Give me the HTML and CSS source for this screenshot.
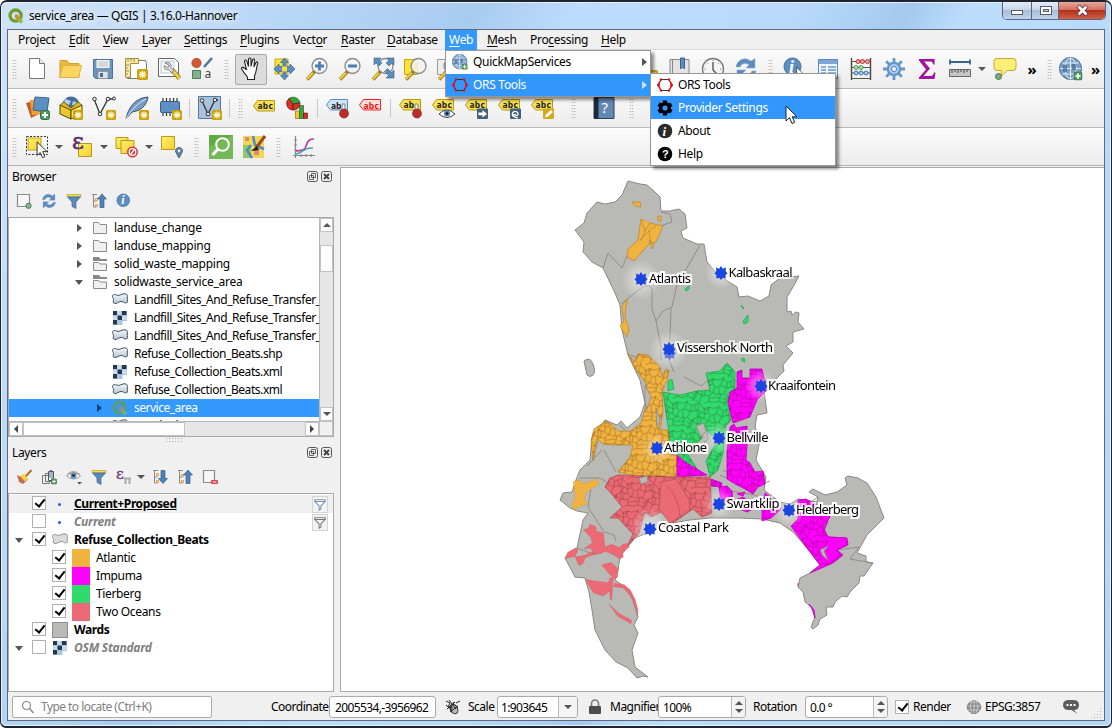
FILE: index.html
```html
<!DOCTYPE html>
<html lang="en">
<head>
<meta charset="utf-8">
<title>service_area — QGIS | 3.16.0-Hannover</title>
<link rel="stylesheet" href="styles.css">
</head>
<body>
<svg class="defs" width="0" height="0">
  <defs>
    <linearGradient id="gy" x1="0" y1="0" x2="1" y2="1"><stop offset="0" stop-color="#fff06a"/><stop offset="1" stop-color="#f0cf30"/></linearGradient>
    <linearGradient id="gp" x1="0" y1="0" x2="0" y2="1"><stop offset="0" stop-color="#f4f7fa"/><stop offset="1" stop-color="#b9c6d4"/></linearGradient>
    <symbol id="qgis" viewBox="0 0 16 16"><circle cx="7.6" cy="7.6" r="5.6" fill="none" stroke="#6b9f2f" stroke-width="3.3"/><path d="M8 8l6 6.5" stroke="#8cc04a" stroke-width="3.4"/><path d="M7 6.5h4L9.500 8 12 11l-1.500 1.200L8 9l-1 1.500z" fill="#ee7913"/></symbol>
    <symbol id="star" viewBox="0 0 10 10"><rect width="10" height="10" rx="1.500" fill="#c9a20c"/><path d="M5 1.500v7M1.500 5h7M2.500 2.500l5 5M7.500 2.500l-5 5" stroke="#fff6cf" stroke-width="1.300"/></symbol>
    <symbol id="new" viewBox="0 0 24 24"><path d="M4.500 1.500h10l5 5v15h-15z" fill="#fff" stroke="#777"/><path d="M14.500 1.500v5h5" fill="#eee" stroke="#777"/></symbol>
    <symbol id="open" viewBox="0 0 24 24"><path d="M2 20.500V3.500h7l2 3h10v14z" fill="#e8b93b" stroke="#d1a02a"/><path d="M1.500 20.500L5 8.500h18.500l-3 12z" fill="#fcd462" stroke="#dcb043"/></symbol>
    <symbol id="save" viewBox="0 0 24 24"><path d="M2.500 2.500h19v19h-17l-2-2z" fill="#6d94bd" stroke="#4d7297"/><path d="M5.500 3h13v8h-13z" fill="#f6f6f6"/><path d="M7 5h10M7 7h10M7 9h10" stroke="#aaa" stroke-width=".8"/><path d="M7 14.500h10v7H7z" fill="#dfe3e8" stroke="#888" stroke-width=".7"/><path d="M9 16h3v4H9z" fill="#4d6c8b"/></symbol>
    <symbol id="layout" viewBox="0 0 24 24"><path d="M3.500 3.500h18l1 3v15h-19z" fill="#fff" stroke="#777"/><path d="M1.500 1.500h13v5h-8v14h-5z" fill="#f3e8a9" stroke="#a98c2c"/><path d="M4 2v3M7 2v2M10 2v3M2 8h3M2 11h2M2 14h3M2 17h2" stroke="#7c6a28" stroke-width=".7"/><use href="#star" x="13" y="12" width="11" height="11"/></symbol>
    <symbol id="manager" viewBox="0 0 24 24"><path d="M1.500 1.500h16l4 4v14h-20z" fill="#fff" stroke="#666"/><path d="M4 4h13v12H4z" fill="#f6f6f6" stroke="#b9c7dc"/><path d="M15 12.500l7.500 9" stroke="#a98410" stroke-width="4.500"/><path d="M15 12.500l7.500 9" stroke="#f1d45c" stroke-width="2.500"/><path d="M8 6c4-2 7 1 6 4.500l3 3-2.500 2-3-3c-3 1-5-1-4-4l2.500 2 2-1V8z" fill="#ddd" stroke="#666" stroke-width=".8"/></symbol>
    <symbol id="styles" viewBox="0 0 24 24"><circle cx="6.500" cy="6" r="4.700" fill="#cf5a33" stroke="#9b3c1e" stroke-width=".6"/><path d="M14 10l8-9" stroke="#49759f" stroke-width="2.500"/><path d="M2.500 13.500h8v8h-8z" fill="#84b08a" stroke="#4d7d56"/><text x="14.500" y="21" font-family="Noto Sans" font-size="12" fill="#444">a</text></symbol>
    <symbol id="hand" viewBox="0 0 24 24"><path d="M8.500 22.500v-2.500C6 17 3.500 13.500 2.500 11.500c0-2 2.500-1.500 5 1.500L5.500 4.500c0-2 2-2 2.500 0l1.500 5v-7c0-2 2.500-2 2.500 0v7l1.500-6.500c.5-1.600 2.300-1 2 .5l-.6 6.500 2.100-4.500c.8-1.200 2-.5 1.700.7-1.200 4-1.200 9-3.200 12.800v3.500z" fill="#fff" stroke="#222" stroke-width="1.100"/></symbol>
    <symbol id="panmove" viewBox="0 0 24 24"><path d="M3 2h13v15H3z" fill="#fbe13a" stroke="#c8a61b"/><path d="M12.500 1l4 4.500h-2.500v4h4V7l5 5-5 5v-2.500h-4v4h2.500l-4 4.500-4-4.500H11v-4H7V17l-5-5 5-5v2.500h4v-4H8.500z" fill="#5c8ec4" stroke="#386594" stroke-width=".7"/><path d="M10 9.500h5v5h-5z" fill="#fbe13a"/></symbol>
    <symbol id="lens" viewBox="0 0 24 24"><path d="M2 22.500l8-8.500" stroke="#947014" stroke-width="3.400"/><path d="M2 22l6-6.300" stroke="#f3cf40" stroke-width="2"/><circle cx="14.500" cy="9" r="7.500" fill="#f1f2f2" fill-opacity=".82" stroke="#8a8a8a" stroke-width="1.300"/><path d="M9.500 8c1-3.500 4-4.500 7-4" stroke="#fff" fill="none"/></symbol>
    <symbol id="zin" viewBox="0 0 24 24"><use href="#lens"/><path d="M14.500 4.500v9M10 9h9" stroke="#4f7fb1" stroke-width="2.800"/></symbol>
    <symbol id="zout" viewBox="0 0 24 24"><use href="#lens"/><path d="M10 9h9" stroke="#4f7fb1" stroke-width="2.800"/></symbol>
    <symbol id="zfull" viewBox="0 0 24 24"><use href="#lens"/><path d="M3 1h7L8 3l3 3-3 3-3-3-2 2zM23 1v7l-2-2-3 3-3-3 3-3-2-2zM23 21h-8l2.500-2.500-4-4 3-3 4 4L23 13z" fill="#5c8bbd" stroke="#3a648e" stroke-width=".6"/></symbol>
    <symbol id="zsel" viewBox="0 0 24 24"><path d="M.5 2.500h13v15H.5z" fill="#fbe13a" stroke="#c8a61b"/><use href="#lens"/></symbol>
    <symbol id="zlay" viewBox="0 0 24 24"><path d="M.5 2.500h13v15H.5z" fill="#eee" stroke="#999"/><use href="#lens"/></symbol>
    <symbol id="bookmark" viewBox="0 0 24 24"><path d="M2 2.500h19V21H2z" fill="#e3e3e3" stroke="#888"/><path d="M4.500 3v18" stroke="#888"/><path d="M12.500 1h4v11l-2-2-2 2z" fill="#5c8bbd" stroke="#3a648e"/></symbol>
    <symbol id="clock" viewBox="0 0 24 24"><circle cx="12" cy="12" r="10.500" fill="#f4f4f4" stroke="#777" stroke-width="1.300"/><path d="M12 5v8l4 4" fill="none" stroke="#555" stroke-width="1.400"/><path d="M12 3v1M3.500 12h1.500M19 12h1.500M6 6l.7.7M18 6l-.7.7" stroke="#888"/></symbol>
    <symbol id="refresh" viewBox="0 0 24 24"><path d="M2 10C3 4 8 1 13 2l4 2 4-2.500V11h-9l3-3c-4-3-8-1-9 2z" fill="#5c8bbd" stroke="#8fb3d9" stroke-width=".6"/><path d="M22 14c-1 6-6 9-11 8l-4-2-4 2.500V13h9l-3 3c4 3 8 1 9-2z" fill="#5c8bbd" stroke="#8fb3d9" stroke-width=".6"/></symbol>
    <symbol id="info" viewBox="0 0 24 24"><circle cx="12" cy="12" r="9.500" fill="#5d8ec2" stroke="#41719f"/><text x="9" y="18" font-family="Liberation Serif" font-size="18" font-style="italic" font-weight="bold" fill="#fff">i</text></symbol>
    <symbol id="cursor" viewBox="0 0 14 20"><path d="M1 1v15l3.500-3.300L7 18.500l2.700-1.200-2.500-5.500H12z" fill="#fff" stroke="#222"/></symbol>
    <symbol id="identify" viewBox="0 0 24 24"><circle cx="9.500" cy="9.500" r="8.500" fill="#5d8ec2" stroke="#41719f"/><text x="6" y="16" font-family="Liberation Serif" font-size="18" font-style="italic" font-weight="bold" fill="#fff">i</text><use href="#cursor" x="13" y="9" width="9" height="14"/></symbol>
    <symbol id="table" viewBox="0 0 24 24"><path d="M2.500 2.500h19v19h-19z" fill="#eef5fc" stroke="#5b87b5"/><path d="M3 3h18v4H3z" fill="#7da7d4"/><path d="M5 10h5M5 13h5M5 16h5M12 10h8M12 13h8M12 16h8" stroke="#6c9acb" stroke-width="1.500"/></symbol>
    <symbol id="abacus" viewBox="0 0 24 24"><path d="M2.500 1v22M21.500 1v22" stroke="#444" stroke-width="1.400"/><path d="M2 4.500h20M2 10.500h20M2 16h20M2 21.500h20" stroke="#555"/><g stroke-width=".9"><g fill="#f1a3a3" stroke="#bb2525"><circle cx="9" cy="4.500" r="2"/><circle cx="13.500" cy="4.500" r="2"/><circle cx="18.500" cy="4.500" r="2"/></g><g fill="#b4dfb4" stroke="#3f8d46"><circle cx="7" cy="10.500" r="2"/><circle cx="12" cy="10.500" r="2"/></g><g fill="#abcdf0" stroke="#376ca4"><circle cx="7" cy="16" r="2"/><circle cx="12" cy="16" r="2"/><circle cx="17" cy="16" r="2"/></g></g></symbol>
    <symbol id="gear" viewBox="0 0 24 24"><path d="M12 1v22M1 12h22M4.200 4.200l15.600 15.600M19.800 4.200L4.200 19.800" stroke="#6797c9" stroke-width="2.800"/><circle cx="12" cy="12" r="6.200" fill="#a9cbee" stroke="#6797c9" stroke-width="2.200"/><circle cx="12" cy="12" r="2.600" fill="#f4f4f4" stroke="#5286bb"/></symbol>
    <symbol id="sigma" viewBox="0 0 24 24"><path d="M4 2h15.500v5.500h-1.300c-.6-2.500-1.200-3-3.200-3H9l6 7-6.500 7.500h7c2 0 3-1 3.500-3.500h1.500L19.500 22H4v-1.500l7-8L4 3.500z" fill="#a3119f"/></symbol>
    <symbol id="measure" viewBox="0 0 24 24"><path d="M2 5h20M2 2.500v5M22 2.500v5" stroke="#3a6492" stroke-width="1.800"/><path d="M1.500 12.500h21v7h-21z" fill="#c6c6c6" stroke="#666"/><path d="M4 13v3M7 13v2M10 13v3M13 13v2M16 13v3M19 13v2" stroke="#444"/></symbol>
    <symbol id="tip" viewBox="0 0 24 24"><path d="M4 1.500h16q3 0 3 3v6q0 3-3 3h-6l-6 6 .500-6H4q-3 0-3-3v-6q0-3 3-3z" fill="#fdee76" stroke="#c5a82c"/><circle cx="5.500" cy="19.500" r="3" fill="#7da97d" stroke="#4a7a4a"/></symbol>
    <symbol id="plus" viewBox="0 0 10 10"><rect x=".5" y=".5" width="9" height="9" rx="2" fill="#4f9a5f" stroke="#36713f"/><path d="M5 2v6M2 5h6" stroke="#fff" stroke-width="1.800"/></symbol>
    <symbol id="globe" viewBox="0 0 24 24"><circle cx="11.500" cy="11.500" r="11" fill="#7ba1c9" stroke="#47698e"/><path d="M1 11.500h21M3 6h17M3 17h17M11.500 1v21" stroke="#e3edf7" fill="none"/><ellipse cx="11.500" cy="11.500" rx="5.500" ry="10.500" fill="none" stroke="#e3edf7"/><path d="M4 8h4v7H4zM13 7h4v6h-4z" fill="#45668c" opacity=".7"/><use href="#plus" x="14.500" y="14.500" width="9" height="9"/></symbol>
    <symbol id="layers" viewBox="0 0 24 24"><path d="M0 7l10-3 5 13-10 5z" fill="#c3602c"/><path d="M4 4l12-1 2 15-12 1z" fill="#eda337"/><path d="M9 1l14 1-2 14L7 14z" fill="#5d8fc3" stroke="#3a648e"/><use href="#plus" x="14" y="14" width="10" height="10"/></symbol>
    <symbol id="gpkg" viewBox="0 0 24 24"><circle cx="12" cy="9" r="8.500" fill="#446f9d"/><path d="M6 3l6 2-2 4-5-2zM14 5l5 2-2 3-4-1z" fill="#b8d0e8"/><path d="M1 9l11 5v9L1 18z" fill="#eac929" stroke="#50450d"/><path d="M23 9l-11 5v9l11-5z" fill="#fae366" stroke="#50450d"/><path d="M1 9l4-3 7 6 7-6 4 3-11 5z" fill="#e1b91a" stroke="#50450d" stroke-width=".7"/><use href="#star" x="14" y="14" width="10" height="10"/></symbol>
    <symbol id="vec" viewBox="0 0 24 24"><path d="M2 3l6 15L16 3h6" fill="none" stroke="#333" stroke-width="1.300"/><g fill="#eee" stroke="#333"><circle cx="2.500" cy="3" r="1.800"/><circle cx="8" cy="18" r="1.800"/><circle cx="16" cy="3" r="1.800"/><circle cx="22" cy="2.500" r="1.500"/></g></symbol>
    <symbol id="newvec" viewBox="0 0 24 24"><use href="#vec"/><use href="#star" x="14" y="14" width="10" height="10"/></symbol>
    <symbol id="feather" viewBox="0 0 24 24"><path d="M1 23C3 13 9 2 23 1c-1 8-7 14-16 15z" fill="#789dc4" stroke="#39587a"/><path d="M1 23C6 14 13 7 21 3" fill="none" stroke="#dbe7f3"/><use href="#star" x="14" y="14" width="10" height="10"/></symbol>
    <symbol id="chip" viewBox="0 0 24 24"><path d="M5 2v18M8.500 2v18M12 2v18M15.500 2v18M19 2v18" stroke="#333" stroke-width="1.200"/><rect x="2.500" y="5.500" width="19" height="11" rx="1" fill="#5f8fc3" stroke="#355f8b"/><use href="#star" x="14" y="14" width="10" height="10"/></symbol>
    <symbol id="virt" viewBox="0 0 24 24"><path d="M.5.500h22v22H.5z" fill="#a9c2de" stroke="#5577a0"/><path d="M4 5l6 13L17 4h3" fill="none" stroke="#333" stroke-width="1.300"/><g fill="#eee" stroke="#333"><circle cx="4" cy="4.500" r="1.800"/><circle cx="10" cy="18" r="1.800"/><circle cx="17" cy="4" r="1.800"/></g><use href="#star" x="14" y="14" width="10" height="10"/></symbol>
    <symbol id="tagy" viewBox="0 0 24 24"><path d="M.5 10l4-5.500h17v10.500h-17z" fill="#f6df52" stroke="#b8991a"/><text x="4.500" y="13" font-family="Noto Sans" font-weight="bold" font-size="8.500" textLength="15" fill="#222">abc</text></symbol>
    <symbol id="tagb" viewBox="0 0 24 24"><path d="M.5 9l4-5.500h17v10.500h-17z" fill="#cfe4fa" stroke="#4f8fd0"/><text x="5" y="12.500" font-family="Noto Sans" font-weight="bold" font-size="8.500" textLength="10" fill="#222">ab</text><use href="#pin"/></symbol>
    <symbol id="tagr" viewBox="0 0 24 24"><path d="M.5 9l4-5.500h17v10.500h-17z" fill="#fdd" stroke="#e22"/><text x="4.500" y="12.500" font-family="Noto Sans" font-weight="bold" font-size="8.500" textLength="15" fill="#e11">abc</text></symbol>
    <symbol id="pin" viewBox="0 0 24 24"><path d="M16 14V8h3v7" fill="#eee" stroke="#888"/><circle cx="18" cy="17.500" r="4.500" fill="#bd2c2c" stroke="#8a1919" stroke-width=".6"/></symbol>
    <symbol id="tagpin" viewBox="0 0 24 24"><use href="#tagy" y="-1"/><path d="M15.500 6h5v7h-5z" fill="#f6df52"/><use href="#pin"/></symbol>
    <symbol id="tageye" viewBox="0 0 24 24"><use href="#tagy" y="-1"/><path d="M7 18q8-8 16 0-8 7-16 0z" fill="#fff" stroke="#444"/><circle cx="15" cy="17.500" r="3" fill="#4d83bb"/><circle cx="15" cy="17.500" r="1.300" fill="#111"/></symbol>
    <symbol id="tagmove" viewBox="0 0 24 24"><use href="#tagy" y="-1"/><rect x="12" y="12.500" width="11" height="10.500" rx="1" fill="#42607e"/><path d="M13.500 16.500h4v-2.500l4.500 4-4.500 3.500v-2.300h-4z" fill="#fff"/></symbol>
    <symbol id="tagrot" viewBox="0 0 24 24"><use href="#tagy" y="-1"/><rect x="12" y="12.500" width="11" height="10.500" rx="1" fill="#42607e"/><path d="M15 20.500c-3-5 4-7 5-3 .4 2-2 3-3 1l-1.500.5c.7 3 4 3 4.500 2.500" fill="none" stroke="#fff" stroke-width="1.300"/></symbol>
    <symbol id="tagedit" viewBox="0 0 24 24"><use href="#tagy" y="-1"/><rect x="12" y="12.500" width="11" height="10.500" rx="1" fill="#d4a91a"/><path d="M14 21.500l1-3 5-4.500 2 2-5 4.500z" fill="#fff"/></symbol>
    <symbol id="chart" viewBox="0 0 24 24"><path d="M7 8L3 2.500A7 7 0 0 1 14 7z" fill="#37a43a" stroke="#14531a" stroke-width=".7"/><path d="M7 8L3 2.500A6.500 6.500 0 0 0 7 14z" fill="#d93126" stroke="#5d120d" stroke-width=".7"/><path d="M7 8l7-1a6.500 6.500 0 0 1-7 7z" fill="#d93126" stroke="#5d120d" stroke-width=".7"/><path d="M9.500 15h4v7.500h-4z" fill="#f3c920" stroke="#75610d" stroke-width=".6"/><path d="M13.500 9.500h4v13h-4z" fill="#3da53f" stroke="#18501b" stroke-width=".6"/><path d="M17.500 17h4v5.500h-4z" fill="#cf2e24" stroke="#5d120d" stroke-width=".6"/></symbol>
    <symbol id="book" viewBox="0 0 24 24"><path d="M2 1.500h20v21H2z" fill="#6288b4" stroke="#2d4158"/><path d="M2 1.500h4.500v21H2z" fill="#1d2938"/><text x="9.500" y="17" font-family="Noto Sans" font-size="15" fill="#fff">?</text></symbol>
    <symbol id="select" viewBox="0 0 24 24"><path d="M1.500 1.500h21v18h-21z" fill="none" stroke="#333" stroke-dasharray="2 1.500"/><path d="M3 3h13v12H3z" fill="url(#gy)" stroke="#c3a41b"/><use href="#cursor" x="11" y="6" width="13" height="18"/></symbol>
    <symbol id="selexp" viewBox="0 0 24 24"><path d="M8.500 8.500h13v13h-13z" fill="url(#gy)" stroke="#b99a17"/><text x="2" y="13.500" font-family="DejaVu Serif" font-size="23" fill="#5e2f70" stroke="#5e2f70" stroke-width=".6">ε</text></symbol>
    <symbol id="desel" viewBox="0 0 24 24"><path d="M1 2.500h12v11H1z" fill="url(#gy)" stroke="#b99a17"/><path d="M6 5.500h13v13H6z" fill="url(#gy)" stroke="#b99a17"/><circle cx="17.500" cy="17" r="5.500" fill="#d93636"/><circle cx="17.500" cy="17" r="3.300" fill="none" stroke="#fff" stroke-width="1.300"/><path d="M15.500 19.500l4-5" stroke="#fff" stroke-width="1.300"/></symbol>
    <symbol id="selloc" viewBox="0 0 24 24"><path d="M1.500 1.500h13v13h-13z" fill="url(#gy)" stroke="#b99a17"/><path d="M19 23l-3-5.500a3.400 3.400 0 1 1 6 0z" fill="#6389ae" stroke="#43627f"/><circle cx="19" cy="15.800" r="1.200" fill="#fff"/></symbol>
    <symbol id="greens" viewBox="0 0 24 24"><path d="M0 0h24v24H0z" fill="#62ab43"/><path d="M0 12L24 0v24H0z" fill="#8ac46d" opacity=".5"/><circle cx="13.500" cy="9.500" r="6.300" fill="none" stroke="#fff" stroke-width="2"/><path d="M9 14l-5.500 6" stroke="#fff" stroke-width="3"/></symbol>
    <symbol id="osmedit" viewBox="0 0 24 24"><path d="M1 1h21v22H1z" fill="#f2d65a"/><path d="M1 10h8v13H1z" fill="#8fca63"/><path d="M3 2h4v4H3zM12 14h5v6h-5z" fill="#e08b6b"/><path d="M11 1l2 9 9 4M9 10l-4 5 5 8" stroke="#5487c9" stroke-width="2.500" fill="none"/><path d="M23 1l-9 12" stroke="#9b4d16" stroke-width="3"/><path d="M15 11l-6 5 8-1z" fill="#222"/></symbol>
    <symbol id="plot" viewBox="0 0 24 24"><path d="M3.500 1v22M1 20.500h22M2 5h3M2 10h3M2 15h3M9 19v3M14 19v3M19 19v3" stroke="#888" stroke-width="1.200" fill="none"/><path d="M4 16c6-1 9 0 10-5 2-6 4-7 8-7" fill="none" stroke="#bb3fa0" stroke-width="1.700"/><path d="M4 19c6 0 7-7 17-6" fill="none" stroke="#4da0b0" stroke-width="1.500"/></symbol>
    <symbol id="ors" viewBox="0 0 16 16"><path d="M1 8l3-5.500h8L15 8l-3 5.500H4z" fill="none" stroke="#333" stroke-width="1.200"/><path d="M3 4.500L1 8l2 3.500M13 4.500L15 8l-2 3.500" fill="none" stroke="#f01010" stroke-width="1.400"/><g fill="#f01010"><circle cx="1.500" cy="8" r="1.500"/><circle cx="4" cy="2.500" r="1.200"/><circle cx="12" cy="2.500" r="1.200"/><circle cx="14.500" cy="8" r="1.500"/><circle cx="12" cy="13.500" r="1.200"/><circle cx="4" cy="13.500" r="1.200"/></g></symbol>
    <symbol id="folder" viewBox="0 0 16 16"><path d="M1.500 13.500v-11h5l1.500 2h6.500v9z" fill="#f0f0f0" stroke="#8b8b8b"/></symbol>
    <symbol id="folderl" viewBox="0 0 16 16"><path d="M1 1h6l1.500 2H15v2H1z" fill="#888"/><path d="M1.500 14.500v-8h5l1.500 1.500h6.500v6.500z" fill="#f0f0f0" stroke="#8b8b8b"/></symbol>
    <symbol id="poly" viewBox="0 0 16 16"><path d="M.5 4.500c0-2.500 2.500-2.200 4.500-1.300 2.500 1 5-1.700 8-1.400 2.500.2 2.600 2 2.300 4.200-.2 2 .7 4.300-.8 5-1.500.6-3-1.700-5.500-1.500S4.500 12 2.500 11.500s-1-2.500-1-4S.5 6 .5 4.500z" fill="url(#gp)" stroke="#3e5065"/></symbol>
    <symbol id="polyg" viewBox="0 0 16 16"><path d="M.5 4.500c0-2.500 2.500-2.200 4.500-1.300 2.500 1 5-1.700 8-1.400 2.500.2 2.600 2 2.300 4.200-.2 2 .7 4.300-.8 5-1.500.6-3-1.700-5.500-1.500S4.500 12 2.500 11.500s-1-2.500-1-4S.5 6 .5 4.500z" fill="#dcdcdc" stroke="#8f8f8f"/></symbol>
    <symbol id="raster" viewBox="0 0 16 16"><path d="M1 1h14v14H1z" fill="#aac3df"/><path d="M5.500 5.500h4v4h-4z" fill="#3f5d80"/><path d="M1 1h4v4H1zM10 1h4.500v4H10zM6 6h4v4H6zM1 10h4v4.500H1z" fill="#25374d"/><path d="M5 1h4v4H5zM1 6h4v4H1zM10 6h5v4h-5z" fill="#c8daed"/><path d="M10.500 11H15v4h-4.500z" fill="#fff"/></symbol>
    <symbol id="funnel" viewBox="0 0 16 16"><path d="M1 1.500h14v2H1z" fill="#f4e04c" stroke="#a99a2e" stroke-width=".6"/><path d="M1.500 4h13L10 9v6.500l-4-2V9z" fill="#5c89b9" stroke="#406c9a" stroke-width=".7"/></symbol>
    <symbol id="funnelo" viewBox="0 0 16 16"><path d="M2 2.500h12v2H2zM2.500 5L7 9.500v5l2-1.500V9.500L13.500 5" fill="#fff" stroke="currentColor" stroke-width="1.200"/></symbol>
    <symbol id="addl" viewBox="0 0 16 16"><path d="M1.500 1.500h12v12h-12z" fill="#f7f7f7" stroke="#8b8b8b" stroke-width="1.200"/><circle cx="12.500" cy="12.800" r="2.600" fill="#8cba93" stroke="#3d7e49"/></symbol>
    <symbol id="up" viewBox="0 0 16 16"><path d="M1 1.500h5M2.500 2v12h3M2.500 8h3" stroke="#888" fill="none"/><path d="M4.500 5.500h2v2h-2zM4.500 11.500h2v2h-2z" fill="#fff" stroke="#f19a2d"/><path d="M11 1l4.500 5H13v8.500H9V6H6.500z" fill="#4f82b8" stroke="#355f8c" stroke-width=".7"/></symbol>
    <symbol id="down" viewBox="0 0 16 16"><path d="M1 1.500h5M2.500 2v12h3M2.500 8h3" stroke="#888" fill="none"/><path d="M4.500 4.500h2v2h-2zM4.500 11.500h2v2h-2z" fill="#fff" stroke="#f19a2d"/><path d="M11 14.500L6.500 9.500H9V1.500h4v8h2.500z" fill="#4f82b8" stroke="#355f8c" stroke-width=".7"/></symbol>
    <symbol id="brush" viewBox="0 0 16 16"><path d="M15.500 1l-6 6.500" stroke="#b96d24" stroke-width="2"/><path d="M1 6l3 1.500 4-2 4 5-5 4.500-4-2z" fill="#e8603c"/><path d="M4 7l4-2 4 5-3 2.500z" fill="#f6d53f"/><path d="M3 10l5 3" stroke="#5b8ec7" stroke-width="1.300"/></symbol>
    <symbol id="group" viewBox="0 0 16 16"><path d="M1.500 6.500h7v8h-7zM4.500 4.500h7v8h-7z" fill="#eee" stroke="#777"/><path d="M7.500 2.500h5v9h-5z" fill="#fff" stroke="#555"/><path d="M9 9V2q1-2 2 0v8" stroke="#446f9d" fill="none"/><use href="#plus" x="10" y="9.500" width="6" height="6"/></symbol>
    <symbol id="eye" viewBox="0 0 16 16"><path d="M.5 7q7-7 14 0-7 6-14 0z" fill="#fff" stroke="#999"/><circle cx="7.500" cy="6.500" r="3.200" fill="#6c96c2"/><circle cx="7.500" cy="6.500" r="1.400" fill="#234"/><path d="M1 5.500q6-6 13 0" fill="none" stroke="#b6926c"/><path d="M11 13h5l-2.500 2.500z" fill="#555"/></symbol>
    <symbol id="epsf" viewBox="0 0 16 16"><text x="0" y="10" font-family="DejaVu Serif" font-size="15" fill="#6b3b7c" stroke="#6b3b7c" stroke-width=".4">ε</text><path d="M8 9.500h7M9.500 10v5M13.500 10v5" stroke="#aaa" stroke-width="2"/></symbol>
    <symbol id="rem" viewBox="0 0 16 16"><path d="M1.500 1.500h11v12h-11z" fill="#f7f7f7" stroke="#8b8b8b" stroke-width="1.200"/><rect x="9" y="11" width="7" height="4" rx="1" fill="#de4444"/><path d="M10.500 13h4" stroke="#fff"/></symbol>
    <symbol id="float" viewBox="0 0 11 11"><rect x=".5" y=".5" width="10" height="10" rx="2" fill="none" stroke="#555"/><path d="M4.500 2.500h4v4h-4zM2.500 4.500h4v4h-4z" fill="#f0f0f0" stroke="#555" stroke-width=".9"/></symbol>
    <symbol id="close" viewBox="0 0 11 11"><rect x=".5" y=".5" width="10" height="10" rx="2" fill="none" stroke="#555"/><path d="M3 3l5 5M8 3l-5 5" stroke="#444" stroke-width="2"/></symbol>
    <symbol id="site" viewBox="-8 -8 16 16"><path d="M0-7l1.800 2.700L5-5.500 4.600-2 6.500.5 4.500 2.200 4.800 5.500 1.800 4.800 0 7-1.800 4.800-4.800 5.500-4.500 2.200-6.500.5-4.600-2-5-5.500-1.800-4.300z" fill="#1b45e0"/></symbol>
    <pattern id="blocks" width="40" height="36" patternUnits="userSpaceOnUse" patternTransform="rotate(9) scale(.8)"><path d="M0 5l7-3 6 4 9-5 7 6 6-3 5 1M7 2l-2 9-5 3M5 11l8 2V6M13 13l8-3 1-9M21 10l10 3-2-6M31 13l4-2V4M35 11l5 3M13 13l-3 8-10 2M10 21l6 3 7-6-2-8M23 18l8 1V13M31 19l5 3 4-1M23 18l1 9-8-3M24 27l9-1 3-4M16 24l-2 8-8-1-6 2M6 31l1-9M14 32l6 4M24 27l-2 9M33 26l1 7-6 3M34 33l6 0M13 36V32M7 2V0M22 1V0M29 7l3 2 3-5M3 13l2 9M17 3l1 8M25 11l-1 7M27 18v8M10 26l5 2M38 14l-1 8M34 29l6-2M0 27l7-1M19 21l-3 11" fill="none" stroke="#301000" stroke-opacity=".3" stroke-width="1.100"/></pattern>
    <radialGradient id="halo"><stop offset="0" stop-color="#fff" stop-opacity=".6"/><stop offset="1" stop-color="#fff" stop-opacity="0"/></radialGradient>
    <filter id="buffer" x="-5%" y="-5%" width="110%" height="110%" color-interpolation-filters="sRGB"><feMorphology in="SourceAlpha" operator="dilate" radius="1.500" result="fat"/><feFlood flood-color="#fff"/><feComposite in2="fat" operator="in" result="edge"/><feGaussianBlur in="edge" stdDeviation=".35" result="soft"/><feMerge><feMergeNode in="soft"/><feMergeNode in="SourceGraphic"/></feMerge></filter>
    <path id="z-atlantis" d="M641 219l9 4 13 3-7 16-7 2-15 17-7-4 1-8 10-9zM632 202l8 0 1 5-6-1zM658 216h3v5h-3zM649 240l5 4-2 5zM628 298l-6 8 2 15-4 5 7 11 2-7-4-14 1-10z"/>
    <path id="z-atlantic" d="M628 353l6 9 4-8 10 1 12 12 2 9 4-7 3 1-2 10-5 12 1 20-3 18h9l1 25h7v22h-37l-22-5 12-15 3-12h-16l-14-1-5-5-5 22-2-20 3-12 12-8 6 4 6 6h13l10-8 5-17v-23l-10-13z"/>
    <path id="z-tierberg" d="M663 392l17 3 17-4 13-1-4-17 14-2 7-8 8 9v18l-7 3 3 27-5 6-3 27-5 17-8 7-4-16 11-20-14-15-1 12-15 15 10 16-10-5-10-11-7-13-4-27z"/>
    <path id="z-impuma" d="M737 372l5-2v8h8v-9h12l5 21-10 10-7 17-17 6-5-20 2-11 7-4zM730 427l4-3 2 4 11-2v21l-1 13 4 3 5 9 8-1 2 13-7 3-5 7-8-5-8-4-10-6v-28zM677 455l8 7 22 13-30 2zM711 479l11 4-1 4-10-1zM719 487l8-1 5 5 1 10-12 1zM735 500l8-3 14 10-10 5-8-3zM762 508l3-15 12 9 4 7-10 9-9 3z"/>
    <path id="z-helderberg" d="M798 500l8-1 14 8 10 10-7 10 5 10 19 1 1 7-11 5 6 5-10 8-23 10 10-8-13-17-16-22 7-7z"/>
    <path id="z-oceans" d="M618 475l59 2h33l2 36-10 4-9-8-20 14-12-11-10 5-6-5-6 21-13 15 7-14-15-16h-8l12-11-12-15-5-5 5-9z"/>
  </defs>
</svg>

<div class="window">
  <header class="titlebar">
    <svg class="i16"><use href="#qgis"/></svg>
    <span class="title">service_area — QGIS | 3.16.0-Hannover</span>
    <div class="winbtns">
      <span class="wb"><svg width="28" height="18"><rect x="8.500" y="8.500" width="11" height="4" fill="#fff" stroke="#555c6a"/></svg></span>
      <span class="wb"><svg width="26" height="18"><rect x="8.500" y="4.500" width="11" height="8" fill="#fff" stroke="#555c6a"/><rect x="11.500" y="7.500" width="5" height="2" fill="#b7cbe2" stroke="#555c6a"/></svg></span>
      <span class="wb red"><svg width="46" height="18"><path d="M19 4l9 9M28 4l-9 9" stroke="#5b3340" stroke-width="4.500"/><path d="M19.500 4.500l8 8M27.500 4.500l-8 8" stroke="#fff" stroke-width="2.700"/></svg></span>
    </div>
  </header>

  <div class="client">
    <nav class="menubar">
      <span>Pro<u>j</u>ect</span><span><u>E</u>dit</span><span><u>V</u>iew</span><span><u>L</u>ayer</span><span><u>S</u>ettings</span><span><u>P</u>lugins</span><span>Vect<u>o</u>r</span><span><u>R</u>aster</span><span><u>D</u>atabase</span><span class="active"><u>W</u>eb</span><span><u>M</u>esh</span><span>Pro<u>c</u>essing</span><span><u>H</u>elp</span>
    </nav>

    <div class="toolbar t1">
      <i class="handle"></i>
      <svg><use href="#new"/></svg><svg><use href="#open"/></svg><svg><use href="#save"/></svg><svg><use href="#layout"/></svg><svg><use href="#manager"/></svg><svg><use href="#styles"/></svg>
      <i class="handle"></i>
      <b class="pressed"><svg><use href="#hand"/></svg></b><svg><use href="#panmove"/></svg><svg><use href="#zin"/></svg><svg><use href="#zout"/></svg><svg><use href="#zfull"/></svg><svg><use href="#zsel"/></svg><svg><use href="#zlay"/></svg>
      <i></i>
      <svg><use href="#star" x="13" y="13" width="10" height="10"/></svg><svg><use href="#bookmark"/></svg><svg><use href="#clock"/></svg><svg><use href="#refresh"/></svg>
      <i class="handle"></i>
      <svg><use href="#identify"/></svg><svg><use href="#table"/></svg><svg><use href="#abacus"/></svg><svg><use href="#gear"/></svg><svg><use href="#sigma"/></svg><svg><use href="#measure"/></svg><i class="drop"></i><svg><use href="#tip"/></svg>
      <span class="more">»</span><i class="handle"></i><svg class="wide"><use href="#globe"/></svg><span class="more">»</span>
    </div>

    <div class="toolbar t2">
      <i class="handle"></i>
      <svg><use href="#layers"/></svg><svg><use href="#gpkg"/></svg><svg><use href="#newvec"/></svg><svg><use href="#feather"/></svg><svg><use href="#chip"/></svg>
      <i class="sep"></i><svg><use href="#virt"/></svg><i class="sep"></i><i class="handle"></i>
      <svg><use href="#tagy"/></svg><svg><use href="#chart"/></svg><i class="sep"></i>
      <svg><use href="#tagb"/></svg><svg><use href="#tagr"/></svg><i class="sep"></i>
      <svg><use href="#tagpin"/></svg><svg><use href="#tageye"/></svg><svg><use href="#tagmove"/></svg><svg><use href="#tagrot"/></svg><svg><use href="#tagedit"/></svg>
      <i class="handle"></i><svg><use href="#book"/></svg><i class="handle"></i>
    </div>

    <div class="toolbar t3">
      <i class="handle"></i>
      <svg><use href="#select"/></svg><i class="drop"></i><svg><use href="#selexp"/></svg><i class="drop"></i><svg><use href="#desel"/></svg><i class="drop"></i><svg><use href="#selloc"/></svg>
      <i class="handle"></i><svg><use href="#greens"/></svg><svg><use href="#osmedit"/></svg><i class="handle"></i><svg><use href="#plot"/></svg>
    </div>

    <div class="work">
      <aside class="docks">
        <div class="docktitle"><span>Browser</span><svg><use href="#float"/></svg><svg><use href="#close"/></svg></div>
        <div class="dockbar b1"><svg><use href="#addl"/></svg><svg viewBox="0 0 24 24"><use href="#refresh"/></svg><svg><use href="#funnel"/></svg><svg><use href="#up"/></svg><svg viewBox="1 1 22 22"><use href="#info"/></svg></div>
        <div class="box browser">
          <div class="tree">
            <div class="tr"><i class="right"></i><svg><use href="#folder"/></svg><span>landuse_change</span></div>
            <div class="tr"><i class="right"></i><svg><use href="#folder"/></svg><span>landuse_mapping</span></div>
            <div class="tr"><i class="right"></i><svg><use href="#folderl"/></svg><span>solid_waste_mapping</span></div>
            <div class="tr"><i class="down"></i><svg><use href="#folderl"/></svg><span>solidwaste_service_area</span></div>
            <div class="tr sub"><i></i><svg><use href="#poly"/></svg><span>Landfill_Sites_And_Refuse_Transfer_</span></div>
            <div class="tr sub"><i></i><svg><use href="#raster"/></svg><span>Landfill_Sites_And_Refuse_Transfer_</span></div>
            <div class="tr sub"><i></i><svg><use href="#poly"/></svg><span>Landfill_Sites_And_Refuse_Transfer_</span></div>
            <div class="tr sub"><i></i><svg><use href="#poly"/></svg><span>Refuse_Collection_Beats.shp</span></div>
            <div class="tr sub"><i></i><svg><use href="#raster"/></svg><span>Refuse_Collection_Beats.xml</span></div>
            <div class="tr sub"><i></i><svg><use href="#poly"/></svg><span>Refuse_Collection_Beats.xml</span></div>
            <div class="tr sub sel"><i class="right"></i><svg opacity=".65"><use href="#qgis"/></svg><span>service_area</span></div>
            <div class="tr sub"><i></i><svg><use href="#poly"/></svg><span>Wards.shp</span></div>
          </div>
          <div class="vscroll"><i class="sb"><b class="tri u"></b></i><i class="thumb"></i><i class="sb"><b class="tri d"></b></i></div>
          <div class="hscroll"><i class="sb"><b class="tri l"></b></i><i class="thumb"></i><i class="track"></i><i class="sb"><b class="tri r"></b></i></div>
          <div class="corner"></div>
        </div>
        <div class="split"></div>
        <div class="docktitle"><span>Layers</span><svg><use href="#float"/></svg><svg><use href="#close"/></svg></div>
        <div class="dockbar b2"><svg><use href="#brush"/></svg><svg><use href="#group"/></svg><svg><use href="#eye"/></svg><svg><use href="#funnel"/></svg><svg><use href="#epsf"/></svg><i class="drop"></i><svg><use href="#down"/></svg><svg><use href="#up"/></svg><svg><use href="#rem"/></svg></div>
        <div class="box layers">
          <div class="lr hl"><i></i><b class="cb on"></b><em class="dot"></em><span class="bold under">Current+Proposed</span><svg class="fb blue"><use href="#funnelo"/></svg></div>
          <div class="lr"><i></i><b class="cb"></b><em class="dot"></em><span class="off">Current</span><svg class="fb"><use href="#funnelo"/></svg></div>
          <div class="lr"><i class="down"></i><b class="cb on"></b><svg><use href="#polyg"/></svg><span class="bold">Refuse_Collection_Beats</span></div>
          <div class="lr leaf"><b class="cb on"></b><em class="sw atlantic"></em><span>Atlantic</span></div>
          <div class="lr leaf"><b class="cb on"></b><em class="sw impuma"></em><span>Impuma</span></div>
          <div class="lr leaf"><b class="cb on"></b><em class="sw tierberg"></em><span>Tierberg</span></div>
          <div class="lr leaf"><b class="cb on"></b><em class="sw oceans"></em><span>Two Oceans</span></div>
          <div class="lr"><i></i><b class="cb on"></b><em class="ward"></em><span class="bold">Wards</span></div>
          <div class="lr"><i class="down"></i><b class="cb"></b><svg><use href="#raster"/></svg><span class="off">OSM Standard</span></div>
        </div>
      </aside>

      <main class="map">
        <svg width="763" height="523" viewBox="341 168 763 523">
          <g class="ward-shape">
            <path d="M628 181L640 184 647 185 654 191 660 197 661 211 670 211 679 209 685 214 687 228 681 231 683 238 697 244 704 244 707 262 713 269 723 278 737 287 739 297 748 296 760 301 769 296 771 285 780 278 799 276 793 287 787 297 787 312 791 311 792 315 796 312 799 313 798 322 804 329 793 332 793 342 786 346 793 353 783 365 784 371 776 379 764 391 767 413 757 415 755 427 760 440 756 460 766 477 764 490 772 496 780 502 790 504 798 499 817 502 818 497 809 492 813 489 825 495 837 492 847 485 845 478 848 476 858 478 867 483 876 497 884 518 867 535 857 553 866 556 866 562 873 563 864 576 860 576 859 583 850 592 847 597 842 596 835 602 833 607 826 607 827 615 820 619 818 625 813 629 811 627 815 617 813 608 805 602 803 592 798 587 800 578 810 573 820 565 807 548 793 532 780 523 762 519 740 518 710 518 690 520 672 523 655 530 635 538 625 550 620 557 618 570 615 580 625 587 633 600 638 617 634 625 638 633 632 650 635 667 648 677 643 676 637 678 628 668 616 662 605 650 595 630 592 610 589 592 585 578 575 577 565 558 577 548 583 520 588 513 577 511 570 508 560 500 563 493 572 492 576 480 580 470 590 460 592 437 605 420 617 425 621 421 627 428 640 417 645 403 640 380 628 355 622 330 620 305 615 293 603 268 592 262 583 252 584 242 575 230 584 223 587 213 597 202 605 204 615 202 622 195z"/>
            <path d="M584 361q6-5 9 3t0 11-6 0z"/>
            <path class="ln" d="M603 268l5-15 14 15 5-12M621 304l20-16 8-3 3 4v20l4 12M656 321l5 25v14M700 245l-23 40-5 22-9 4-7 10M671 308l-2 52 5 12M684 377l17 9 10-8h10M661 212l9 2 2 8-12 4M631 355l25 12M620 425l15 15M580 478h20l10 6 12-6M602 450l-15 16M604 450l12 22M592 482l-4 25 16 25 10 3 2 6M577 548l18 7 13-8 12 12M700 447l8-8-2-14M720 475l30 14 20-8M723 470l20 12 14 3M725 490l30 5 25 12M818 497l-7 5M837 550l22-3-9 12 23 4"/>
          </g>
          <g class="zones">
            <use class="orange" href="#z-atlantis"/><use class="orange" href="#z-atlantic"/><use class="green" href="#z-tierberg"/><use class="pink" href="#z-impuma"/><use class="pink" href="#z-helderberg"/><use class="red" href="#z-oceans"/>
            <path class="orange" transform="translate(555 470) scale(.3333)" d="M55 35l20-5 10 12 40-15 8 15-40 25-5 20 10 15-30 10-12 8-5-15 10-25z"/>
            <path class="green" d="M668 381l4-2 2 10-6 2zM685 289l4-3 0 3-3 2zM741 305l3 3-1 1zM743 321l5-6v7l-4 2zM741 359l3-1 1 4-3-1z"/>
            <path class="pink" d="M737 494l8-2-2 4zM798 583v3M809 604l5 6 1 8-3-9z"/>
          </g>
          <g class="streets"><use href="#z-atlantic"/><use href="#z-tierberg"/><use href="#z-impuma"/><use href="#z-helderberg"/><use href="#z-oceans"/></g>
          <g class="zones">
            <path class="orange" d="M641 219l4 12 5-8M640 240l9-9 7-5M645 231l-4 10M649 231l2 12"/>
            <path class="pink" d="M828 521l-5 12 6 4 17 1 1 7-11 5 4 4-9 8-8 2-4-12 9-9-6-12z"/>
            <path class="red" d="M661 482l15-3 13 20 1 11-20 13-11-14z"/>
            <path class="red thin" d="M666 485q12 10 14 31"/>
            <path class="red" transform="translate(555 470) scale(.3333)" d="M85 180l15-5 5-12 18 7 2 14 20 5 5 42 20-8 25 10 5-8 15-5 8 10-20 18 2 12-10 8-20-14-25-10-15 8-20-2-8-16-20 2 25-18-6-18zM30 265l8-18 25-14 5 8-8 20 30-5 25-12 5 8-30 12-5 15-12 8-8-14-4-14-28 6zM140 285l28-8 22 20-3 26-12 2-18-20zM90 328l30 5 40 5 5-15 10 2-5 65-5-2v-25l-20 15-30-10zM178 340l30 4 18 16 15 30 8 30-2 18-6-24-12-34-24-26-28-4zM162 402l28 27 40 22-2 10-40-22z"/>
            <path class="grey" d="M820 550l8-4-4 5 4 9-5-4zM639 478l8-2 1 6-7 2zM696 426l8-3 2 8-5 6zM645 385l6 12-4 12-2-8zM656 408l4 12-3 8z"/>
          </g>
          <g>
            <circle class="h" cx="641" cy="280" r="20"/><circle class="h" cx="669" cy="350" r="20"/><circle class="h" cx="761" cy="386" r="16"/><circle class="h" cx="719" cy="438" r="16"/><circle class="h" cx="657" cy="449" r="15"/><circle class="h" cx="719" cy="504" r="16"/><circle class="h" cx="789" cy="511" r="16"/><circle class="h" cx="650" cy="528" r="20"/><circle class="h" cx="721" cy="273" r="16"/>
            <use href="#site" x="661.500" y="345" width="16" height="16" opacity=".6"/>
            <use href="#site" x="633" y="271" width="16" height="16"/><use href="#site" x="713" y="265" width="16" height="16"/><use href="#site" x="661" y="341" width="16" height="16"/><use href="#site" x="753" y="378" width="16" height="16"/><use href="#site" x="711" y="430" width="16" height="16"/><use href="#site" x="649" y="440" width="16" height="16"/><use href="#site" x="711" y="496" width="16" height="16"/><use href="#site" x="781" y="502" width="16" height="16"/><use href="#site" x="642" y="521" width="16" height="16"/>
          </g>
          <g class="lbl" filter="url(#buffer)">
            <text x="649" y="283" textLength="42">Atlantis</text><text x="728.500" y="277" textLength="64">Kalbaskraal</text><text x="677" y="352" textLength="96">Vissershok North</text><text x="768" y="390" textLength="68">Kraaifontein</text><text x="726.500" y="442" textLength="42">Bellville</text><text x="664" y="452" textLength="43">Athlone</text><text x="726.500" y="508" textLength="53">Swartklip</text><text x="796" y="514" textLength="63">Helderberg</text><text x="658" y="532" textLength="71">Coastal Park</text>
          </g>
        </svg>
      </main>
    </div>

    <footer class="status">
      <div class="search"><svg width="14" height="14"><circle cx="5.500" cy="5.500" r="4" fill="none" stroke="#888" stroke-width="1.200"/><path d="M8.500 8.500l4 4.500" stroke="#888" stroke-width="1.400"/></svg><span>Type to locate (Ctrl+K)</span></div>
      <span>Coordinate</span><div class="field"><span>2005534,-3956962</span></div>
      <svg class="mid" width="16" height="16"><ellipse cx="9" cy="10" rx="3.500" ry="5" transform="rotate(-30 9 10)" fill="#bbb" stroke="#222"/><path d="M1 2l4 2-2 4 5 1M4 1l7 9M1 6l6 5M9 3l-3 5M11 4l4-2M2 10l8-7M5 13l8-6" fill="none" stroke="#222"/></svg>
      <span>Scale</span><div class="field combo"><span>1:903645</span><b><i class="drop"></i></b></div>
      <svg class="mid" width="14" height="16"><path d="M3.500 8V4.500a3.500 3.500 0 0 1 7 0V8" fill="none" stroke="#777" stroke-width="1.600"/><rect x="1" y="7" width="12" height="8" rx="1" fill="#4d4d4d"/></svg>
      <span>Magnifier</span><div class="field spin"><span>100%</span><b><i class="tri u"></i><i class="tri d"></i></b></div>
      <span class="rot">Rotation</span><div class="field spin"><span>0.0 °</span><b><i class="tri u"></i><i class="tri d"></i></b></div>
      <b class="cb on"></b><span>Render</span>
      <svg class="mid" width="16" height="14"><path d="M1 6l3-4 4-1.500L12 2l3 4-1 4-4 3.500H6L2 10z" fill="#8a8a8a" stroke="#777"/><path d="M0 6h16M2 10h12M4 2h8M8 0v14M5 1q-2 6 1 12M11 1q2 6-1 12" fill="none" stroke="#ddd" stroke-width=".7"/></svg>
      <span>EPSG:3857</span>
      <svg class="mid" width="18" height="16"><path d="M7 1h4q6 0 6 5t-5 5l3.500 4-6-4H7q-6 0-6-5t6-5z" fill="#5c5c5c"/><path d="M4.500 5h2v2h-2zM8 5h2v2H8zM11.500 5h2v2h-2z" fill="#fff"/></svg>
      <i class="grip"></i>
    </footer>
  </div>

  <div class="menu web-menu">
    <div class="mi"><svg viewBox="0 0 24 24"><use href="#globe"/></svg><span>QuickMapServices</span><i class="right"></i></div>
    <div class="mi on"><svg><use href="#ors"/></svg><span>ORS Tools</span><i class="right"></i></div>
  </div>
  <div class="menu ors-menu">
    <div class="mi"><svg><use href="#ors"/></svg><span>ORS Tools</span></div>
    <div class="mi on"><svg viewBox="0 0 16 16"><path d="M8 .5v15M1.500 4.250l13 7.500M14.500 4.250l-13 7.500" stroke="#000" stroke-width="4.200"/><circle cx="8" cy="8" r="4.500" fill="none" stroke="#000" stroke-width="3"/><circle cx="8" cy="8" r="2.600" fill="#3197fd"/></svg><span>Provider Settings</span></div>
    <div class="mi"><svg viewBox="0 0 16 16"><circle cx="8" cy="8" r="7.300" fill="#2b2b2b"/><text x="5.500" y="12.500" font-family="Liberation Serif" font-size="13" font-weight="bold" font-style="italic" fill="#fff">i</text></svg><span>About</span></div>
    <div class="mi"><svg viewBox="0 0 16 16"><circle cx="8" cy="8" r="7.300"/><text x="5" y="12" font-family="Liberation Sans" font-size="11" font-weight="bold" fill="#fff">?</text></svg><span>Help</span></div>
  </div>
  <svg class="pointer"><use href="#cursor"/></svg>
</div>
</body>
</html>
```
FILE: styles.css
```css
* { box-sizing: border-box; }
html, body { margin: 0; width: 1112px; height: 728px; overflow: hidden; background: #fff; }
body { font: 12px/18px "Noto Sans", "Open Sans", sans-serif; color: #000; letter-spacing: -0.35px; }
i, em { font-style: normal; }
svg { display: block; flex: none; }
.defs { position: absolute; }

.window {
  position: relative; width: 1112px; height: 728px; border: 1px solid #1e2530; border-radius: 7px 7px 6px 6px;
  border-top-width: 2px; border-bottom-width: 2px;
  background: linear-gradient(115deg, #cfe3f8 0, #b3d3f5 25%, #a9cbf0 33%, #bcdcfd 40%, #b9dafb 55%, #a5c9ef 63%, #bcdcfc 67%, #b5d6f8 100%);
  box-shadow: inset 0 0 0 1px #e6f3ff; overflow: hidden;
}
.titlebar { display: flex; align-items: center; height: 27px; padding-left: 7px; }
.titlebar .i16 { width: 16px; height: 16px; }
.title { margin-left: 5px; text-shadow: 0 0 8px #fff, 0 0 8px #fff; letter-spacing: -0.38px; }
.winbtns { display: flex; align-self: flex-start; margin: 0 5px 0 auto; border: 1px solid #59677c; border-top: 0; border-radius: 0 0 5px 5px; overflow: hidden; }
.wb { height: 17px; background: linear-gradient(#e4edf7, #c5d5e8 48%, #a8bed8 50%, #bfd4ec); border-right: 1px solid #59677c; }
.wb.red { border: 0; background: linear-gradient(#e7a99b, #d26e5b 48%, #b5301b 50%, #d0604a); }

.client { width: 1098px; height: 692px; margin-left: 6px; border: 1px solid #5b6b7e; background: #f0f0f0; }
.menubar { display: grid; grid-template-columns: 51px 34px 39px 42px 56px 53px 48px 46px 62px 38px 43px 71px 40px; height: 19px; padding-left: 10px; line-height: 20px; letter-spacing: -0.3px; }
.menubar u { text-underline-offset: 2px; }
.menubar .active { margin: 0 10px 0 -4px; padding-left: 4px; background: #3399ff; color: #fff; }

.toolbar { display: grid; align-items: center; height: 39px; border-top: 1px solid #b9b9b9; box-shadow: inset 0 1px #fff; background: linear-gradient(#fbfbfb, #ececec); }
.toolbar svg { width: 24px; height: 24px; justify-self: center; }
.t1 { border-top-color: #d8d8d8; grid-template-columns: 12px repeat(6, 33px) 16px repeat(7, 33px) 165px repeat(4, 33px) 16px repeat(6, 33px) 12px 33px 22px 12px 32px 17px; }
.t2 { grid-template-columns: 13px repeat(5, 33px) 7px 33px 7px 15px 33px 33px 7px 33px 33px 7px repeat(5, 33px) 28px 33px 22px; }
.t3 { height: 38px; grid-template-columns: 12px 33px 12px 33px 12px 33px 12px 33px 16px 33px 33px 17px 33px; }
.handle { width: 5px; height: 20px; justify-self: center; background: radial-gradient(circle, #aaa 0 .6px, transparent .9px) 0 0 / 2.5px 3px; }
.pressed { display: grid; place-items: center; width: 32px; height: 31px; margin-left: 1px; border: 1px solid #aaa; border-radius: 2px; background: #dcdcdc; }
.sep { width: 1px; height: 19px; justify-self: center; background: #c8c8c8; }
.drop { width: 0; height: 0; justify-self: center; border: 4px solid transparent; border-top-color: #555; border-bottom: 0; }
.more { font-size: 15px; font-weight: bold; line-height: 26px; text-align: center; }

.work { display: flex; height: 526px; border-top: 1px solid #b4b4b4; }
.docks { width: 332px; }
.docktitle { display: flex; align-items: center; gap: 3px; height: 21px; padding: 0 8px 0 4px; letter-spacing: -0.35px; }
.docktitle span { flex: 1; }
.docktitle svg { width: 11px; height: 11px; }
.dockbar { display: flex; align-items: center; gap: 9px; height: 30px; padding: 0 0 2px 8px; }
.dockbar svg { width: 16px; height: 16px; }
.b2 .drop { margin: 0 -2px 0 -4px; }
.box { width: 326px; border: 1px solid #a9a9a9; background: #fff; }
.browser { display: grid; grid-template: 203px 15px / 310px 14px; height: 220px; }
.tree { overflow: hidden; padding-top: 1px; }
.tr { display: flex; align-items: center; height: 18px; padding-left: 64px; white-space: nowrap; letter-spacing: -0.26px; }
.tr > i { flex: none; width: 13px; margin-right: 6px; display: block; }
.tr.sub { padding-left: 84px; letter-spacing: -0.43px; }
.tr svg { width: 16px; height: 16px; }
.tr span { margin-left: 6px; }
.tr.sel { background: #3399ff; color: #fff; letter-spacing: -0.5px; }
i.right::before { content: ""; display: block; width: 0; margin-left: 4px; border: 4px solid transparent; border-left: 5px solid #555; border-right: 0; }
i.down::before { content: ""; display: block; width: 0; margin-left: 2px; border: 4px solid transparent; border-top: 5px solid #555; border-bottom: 0; }
.sel i.right::before { border-left-color: #123f6e; }
.vscroll { display: grid; height: 203px; background: #e6e6e6; border-left: 1px solid #b6b6b6; grid-template: 14px 13px 27px 1fr 14px / 1fr; }
.vscroll > :nth-child(2) { grid-row: 3; }
.vscroll > :nth-child(3) { grid-row: 5; }
.hscroll { display: grid; grid-template-columns: 14px 162px 1fr 14px; background: #e6e6e6; border-top: 1px solid #b6b6b6; }
.thumb, .sb { display: grid; place-items: center; background: #fdfdfd; border: 1px solid #c2c2c2; }
.corner { background: #f0f0f0; border: 1px solid #c2c2c2; }
.tri { display: block; width: 0; height: 0; border: 4px solid transparent; }
.tri.u { border-top: 0; border-bottom-color: #555; }
.tri.d { border-bottom: 0; border-top-color: #555; }
.tri.l { border-left: 0; border-right-color: #444; }
.tri.r { border-right: 0; border-left-color: #444; }
.split { width: 18px; height: 5px; margin: 0 auto; background: radial-gradient(circle, #aaa 0 .6px, transparent .9px) 0 0 / 3px 3px; }
.layers { height: 199px; padding-top: 1px; }
.lr { display: flex; align-items: center; height: 18px; padding-left: 4px; }
.lr > i { width: 12px; margin-right: 7px; }
.lr.leaf { padding-left: 43px; }
.lr.hl { background: #efefef; }
.cb { position: relative; flex: none; width: 14px; height: 14px; border: 1px solid #b0b0b0; background: #fff; }
.lr .cb { margin: 0 0 2px 0; }
.cb.on::after { content: ""; position: absolute; left: 4px; top: 0; width: 4px; height: 8px; border: solid #000; border-width: 0 2px 2px 0; transform: rotate(38deg); }
.lr > svg:not(.fb) { width: 16px; height: 16px; margin: 0 6px 0 6px; }
.dot { width: 3px; height: 3px; margin: 0 13px 0 12px; background: #2a55e0; border-radius: 50%; }
.sw { width: 18px; height: 18px; margin: 0 6px 0 6px; }
.atlantic { background: #f1b340; }
.impuma { background: #ff00ff; }
.tierberg { background: #2fdb6c; }
.oceans { background: #ec6a75; }
.ward { width: 16px; height: 16px; margin: 0 6px; background: #b9bab5; border: 1px solid #8f8f8f; }
.bold { font-weight: bold; letter-spacing: -0.4px; }
.under { text-decoration: underline; }
.off { color: #808080; font-weight: bold; font-style: italic; letter-spacing: -0.25px; }
.fb { width: 16px; height: 17px; margin-left: auto; margin-right: 5px; background: #f3f3f3; border: 1px solid #d3d3d3; color: #777; }
.fb.blue { color: #7693b3; }

.map { width: 764px; height: 525px; margin-top: 1px; border: 1px solid #a9a9a9; border-right: 0; background: #fff; overflow: hidden; }
.ward-shape path { fill: #b9bab5; stroke: #8f8684; stroke-width: 1; }
.ward-shape .ln { fill: none; stroke-width: .9; }
.zones { stroke-width: .8; }
.orange { fill: #f1b340; stroke: #b98a33; }
.green { fill: #2fdb6c; stroke: #27a953; }
.pink { fill: #ff00ff; stroke: #c400c4; }
.red { fill: #ec6a75; stroke: #b8535c; }
.grey { fill: #b9bab5; stroke: #8f8684; }
.thin { fill: none; }
.streets { fill: url(#blocks); }
.h { fill: url(#halo); }
.lbl text { font: 13px "Noto Sans", sans-serif; letter-spacing: 0; fill: #000; }

.status { display: grid; grid-template-columns: 200px 60px 57px 107px 33px 28px 81px 33px 47px 89px 58px 84px 9px 14px 4px 46px 26px 74px 1fr 22px; align-items: center; height: 29px; padding-left: 4px; margin-top: 1px; }
.status > span { white-space: nowrap; letter-spacing: -0.5px; margin-left: -1px; }
.status > .rot { margin-left: 6px; }
.search { display: flex; align-items: center; gap: 6px; height: 22px; padding-left: 8px; border: 1px solid #ababab; border-radius: 2px; background: #fff; color: #808080; }
.search span { letter-spacing: -0.55px; }
.status > :nth-child(2) { grid-column: 3; }
.field { display: flex; height: 22px; border: 1px solid #ababab; border-radius: 3px; background: #fff; overflow: hidden; line-height: 21px; }
.field > span { flex: 1; padding-left: 5px; letter-spacing: -0.62px; white-space: nowrap; }
.combo > span { padding-left: 3px; }
.spin > span { padding-left: 4px; }
.spin { margin-right: 1px; }
.field > b { width: 19px; border-left: 1px solid #bbb; background: #f4f4f4; display: grid; place-items: center; }
.spin > b { width: 14px; align-content: center; gap: 4px; }
.mid { justify-self: center; }
.status > .cb { grid-column: 14; margin-left: -3px; }
.status > .cb + span { grid-column: 16; margin-left: -3px; }
.status > .cb ~ .mid { margin-left: -3px; }
.status > .mid + span:nth-last-child(3) { margin-left: -3px; }
.grip { align-self: end; justify-self: end; width: 12px; height: 12px; margin: 0 2px 2px 0; background: radial-gradient(circle, #aaa 0 .7px, transparent 1px) 0 0 / 3px 3px; clip-path: polygon(100% 0, 100% 100%, 0 100%); }

.menu { position: absolute; border: 1px solid #979797; background: #fff; box-shadow: 3px 3px 3px rgba(0, 0, 0, .45); }
.web-menu { left: 444px; top: 48px; width: 206px; height: 47px; }
.ors-menu { left: 649px; top: 71px; width: 186px; height: 93px; }
.mi { display: flex; align-items: center; height: 23px; padding-left: 6px; letter-spacing: -0.3px; }
.ors-menu .mi:first-child { height: 22px; }
.web-menu .mi { height: 22.5px; }
.mi svg { width: 16px; height: 16px; }
.mi span { margin-left: 5px; }
.ors-menu .mi span { letter-spacing: -0.37px; }
.mi.on { background: #3197fd; color: #fff; }
.mi .right { margin: 0 3px 0 auto; }
.mi.on .right::before { border-left-color: #cfe5ff; }
.pointer { position: absolute; left: 784px; top: 103px; width: 14px; height: 20px; }
```
